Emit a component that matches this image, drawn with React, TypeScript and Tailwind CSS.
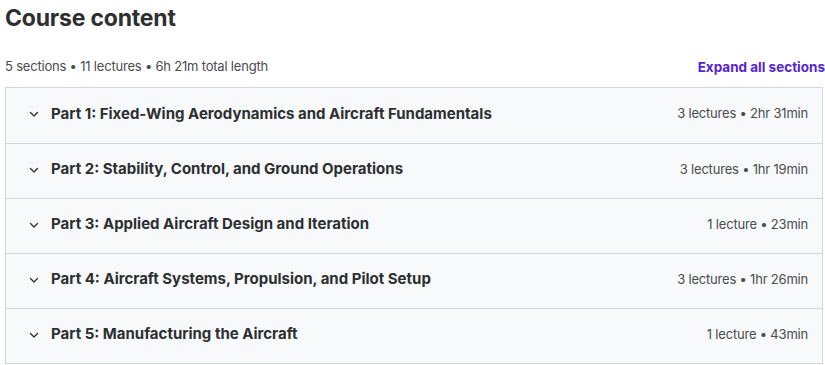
import React from "react";

const sections = [
  { title: "Part 1: Fixed-Wing Aerodynamics and Aircraft Fundamentals", meta: "3 lectures • 2hr 31min" },
  { title: "Part 2: Stability, Control, and Ground Operations", meta: "3 lectures • 1hr 19min" },
  { title: "Part 3: Applied Aircraft Design and Iteration", meta: "1 lecture • 23min" },
  { title: "Part 4: Aircraft Systems, Propulsion, and Pilot Setup", meta: "3 lectures • 1hr 26min" },
  { title: "Part 5: Manufacturing the Aircraft", meta: "1 lecture • 43min" },
];

function Chevron() {
  return (
    <svg width="12" height="12" viewBox="0 0 12 12" fill="none" className="shrink-0">
      <path d="M2.5 4.5 L6 8 L9.5 4.5" stroke="#2d2f31" strokeWidth="1.3" strokeLinecap="round" strokeLinejoin="round" />
    </svg>
  );
}

export default function App() {
  return (
    <div className="w-[825px] h-[365px] bg-white pl-[5px] text-[#2d2f31] overflow-hidden" style={{ fontFamily: "Inter, 'Noto Sans', sans-serif" }}>
      <h2 className="text-[23px] font-bold leading-[36px] tracking-[-0.2px]">Course content</h2>
      <div className="flex items-center justify-between mt-[21px] h-[20px]">
        <span className="text-[13px] text-[#4a4c4e] tracking-[-0.2px]">5 sections • 11 lectures • 6h 21m total length</span>
        <span className="text-[13.5px] font-bold text-[#5624d0]">Expand all sections</span>
      </div>
      <div className="mt-[10px] w-[818px] border border-[#d1d7dc]">
        {sections.map((s, i) => (
          <div
            key={i}
            className={`flex items-center justify-between h-[55px] bg-[#f7f9fa] pl-[22px] pr-[14px] pb-[3px] ${i > 0 ? "border-t border-[#d1d7dc]" : ""}`}
          >
            <div className="flex items-center gap-[11px]">
              <Chevron />
              <span className="text-[15px] font-bold">{s.title}</span>
            </div>
            <span className="text-[13px] text-[#4a4c4e] tracking-[-0.2px]">{s.meta}</span>
          </div>
        ))}
      </div>
    </div>
  );
}
